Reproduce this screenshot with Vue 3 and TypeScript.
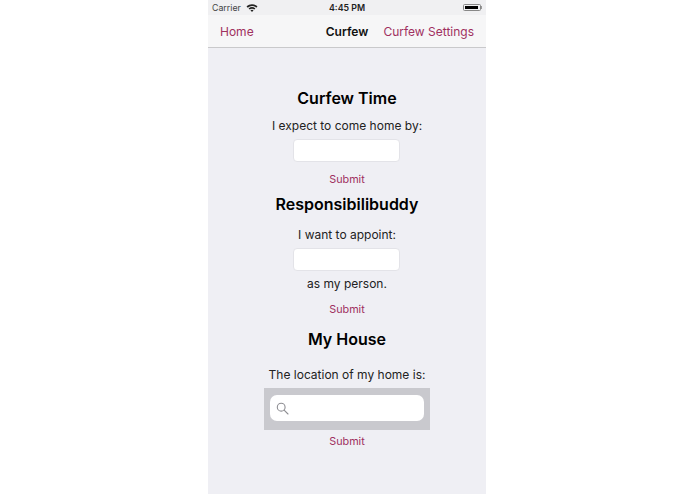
<script setup lang="ts">
const wifiArcs: string[] = [
  "M0.6 3.9a10 10 0 0 1 12.8 0L12 5.5a8 8 0 0 0-10 0z",
  "M3 6.3a6.4 6.4 0 0 1 8 0L9.7 7.7a4.4 4.4 0 0 0-5.4 0z",
  "M5.2 8.6a2.8 2.8 0 0 1 3.6 0L7 10.4z",
];
</script>

<template>
  <div class="page">
    <div class="phone">
      <div class="status">
        <div class="status-left">
          <span>Carrier</span>
          <svg class="wifi" width="12" height="9" viewBox="0 0 14 10.5">
            <path v-for="d in wifiArcs" :key="d" :d="d" fill="#222" />
          </svg>
        </div>
        <span class="clock">4:45 PM</span>
        <div class="battery-wrap">
          <div class="battery"><div class="battery-fill"></div></div>
          <div class="nub"></div>
        </div>
      </div>
      <div class="nav">
        <span class="link">Home</span>
        <span class="title">Curfew</span>
        <span class="link right">Curfew Settings</span>
      </div>
      <div class="content">
        <h2 class="h first">Curfew Time</h2>
        <p class="label l1">I expect to come home by:</p>
        <div class="field f1"></div>
        <span class="submit s1">Submit</span>
        <h2 class="h h2b">Responsibilibuddy</h2>
        <p class="label l2">I want to appoint:</p>
        <div class="field f2"></div>
        <p class="label l3">as my person.</p>
        <span class="submit s2">Submit</span>
        <h2 class="h h3b">My House</h2>
        <p class="label l4">The location of my home is:</p>
        <div class="searchbar">
          <div class="searchfield">
            <svg width="13" height="13" viewBox="0 0 13 13" fill="none" stroke="#8e8e93" stroke-width="1.1">
              <circle cx="5.2" cy="5.2" r="3.9" />
              <path d="M8.1 8.1 12 12" stroke-linecap="round" />
            </svg>
          </div>
        </div>
        <span class="submit s3">Submit</span>
      </div>
    </div>
  </div>
</template>

<style scoped>
.page {
  width: 695px;
  height: 494px;
  background: #fff;
  padding-left: 208px;
  box-sizing: border-box;
  overflow: hidden;
  font-family: Inter, "Liberation Sans", sans-serif;
}
.phone {
  width: 278px;
  height: 494px;
  background: #efeff4;
  display: flex;
  flex-direction: column;
}
.status {
  height: 15px;
  background: #f0f0f2;
  display: flex;
  align-items: center;
  justify-content: space-between;
  padding: 0 4px;
  font-size: 8.8px;
  color: #444;
  position: relative;
}
.status-left {
  display: flex;
  align-items: center;
  gap: 5px;
}
.wifi {
  display: block;
}
.clock {
  position: absolute;
  left: 0;
  right: 0;
  text-align: center;
  font-weight: 600;
  color: #222;
}
.battery-wrap {
  display: flex;
  align-items: center;
  position: relative;
  z-index: 1;
}
.battery {
  width: 18px;
  height: 7px;
  padding: 1px;
  box-sizing: border-box;
  border: 0.5px solid #888;
  border-radius: 1.5px;
}
.battery-fill {
  width: 13px;
  height: 100%;
  background: #000;
}
.nub {
  width: 1px;
  height: 3px;
  background: #999;
}
.nav {
  height: 32px;
  background: #f6f6f7;
  border-bottom: 1px solid #c9c9cb;
  display: grid;
  grid-template-columns: 1fr auto 1fr;
  align-items: center;
  padding: 0 12px;
  font-size: 12px;
}
.link {
  color: #a0305f;
}
.right {
  justify-self: end;
}
.title {
  font-weight: 600;
  color: #111;
}
.content {
  flex: 1;
  display: flex;
  flex-direction: column;
  align-items: center;
}
.h {
  margin: 0;
  font-size: 16px;
  line-height: 20px;
  font-weight: 600;
  color: #000;
}
.first { margin-top: 40px; }
.label {
  margin: 0;
  font-size: 12px;
  line-height: 16px;
  color: #222;
}
.l1 { margin-top: 10px; }
.l2 { margin-top: 13px; }
.l3 { margin-top: 5px; }
.l4 { margin-top: 18px; }
.field {
  width: 107px;
  height: 23px;
  box-sizing: border-box;
  background: #fff;
  border: 1px solid #e3e3e8;
  border-radius: 4px;
  margin-right: 1px;
}
.f1 { margin-top: 5px; }
.f2 { margin-top: 5px; }
.submit {
  font-size: 10.8px;
  line-height: 14px;
  color: #a0305f;
}
.s1 { margin-top: 11px; }
.s2 { margin-top: 11px; }
.s3 { margin-top: 5px; }
.h2b { margin-top: 7px; }
.h3b { margin-top: 12px; }
.searchbar {
  margin-top: 5px;
  width: 166px;
  height: 42px;
  background: #c9c9ce;
  padding: 7px 6px;
  box-sizing: border-box;
}
.searchfield {
  height: 26px;
  background: #fff;
  border-radius: 7px;
  display: flex;
  align-items: center;
  padding-left: 6px;
}
</style>
